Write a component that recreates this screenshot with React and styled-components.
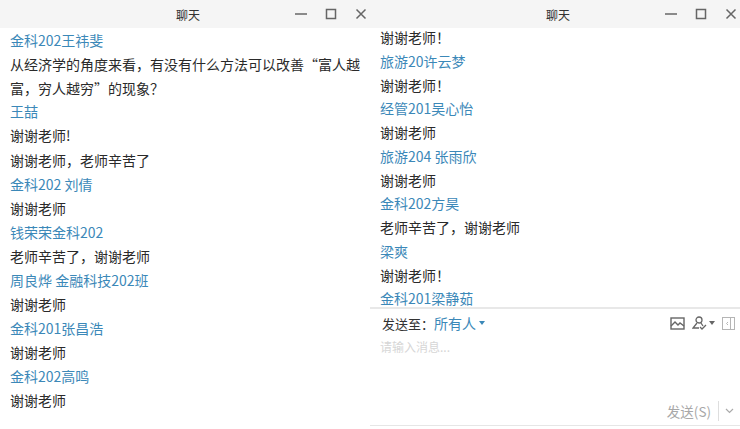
import React from "react";
import styled, { createGlobalStyle } from "styled-components";

const Global = createGlobalStyle`
  html, body { margin: 0; padding: 0; background: #fff; }
  body { width: 740px; height: 429px; overflow: hidden; font-family: "Noto Sans CJK SC", "Liberation Sans", sans-serif; }
`;
const Page = styled.div`
  display: grid;
  grid-template-columns: 370px 370px;
  width: 740px;
  height: 429px;
  overflow: hidden;
`;
const Win = styled.section`
  display: flex;
  flex-direction: column;
  height: 429px;
  min-width: 0;
  background: #fff;
`;
const TitleBar = styled.header`
  position: relative;
  flex: none;
  height: 28px;
  padding-left: 6px;
  background: #f5f5f5;
  display: flex;
  align-items: center;
  justify-content: center;
  font-size: 12px;
  color: #333;
`;
const Controls = styled.div`
  position: absolute;
  right: 2px;
  top: 7px;
  display: flex;
  gap: 16px;
  color: #666;
`;
const Feed = styled.div`
  flex: ${p => (p.$fill ? 1 : "none")};
  height: ${p => (p.$h ? `${p.$h}px` : "auto")};
  overflow: hidden;
  padding: 0 10px;
  display: flex;
  flex-direction: column;
  & > :first-child { margin-top: ${p => p.$shift || 0}px; }
`;
const Row = styled.div`
  flex: none;
  height: ${p => p.$pitch}px;
  line-height: ${p => p.$pitch}px;
  font-size: 14px;
  white-space: nowrap;
  color: ${p => (p.$name ? "#3b88b8" : "#2a2a2a")};
`;
const Wrap = styled(Row)`
  height: 47px;
  line-height: 24px;
  white-space: normal;
  width: 352px;
`;
const Composer = styled.div`
  flex: 1;
  border-top: 2px solid #e8e8e8;
  display: flex;
  flex-direction: column;
  min-height: 0;
`;
const ComposerBar = styled.div`
  flex: none;
  height: 28px;
  display: flex;
  align-items: center;
  padding: 0 5px 0 12px;
  font-size: 13px;
  color: #333;
`;
const Target = styled.span`
  font-size: 14px;
  color: #3b88b8;
  display: inline-flex;
  align-items: center;
  gap: 3px;
`;
const Caret = styled.i`
  width: 0;
  height: 0;
  border-left: 3px solid transparent;
  border-right: 3px solid transparent;
  border-top: 4px solid ${p => p.$c || "#3b88b8"};
`;
const Tools = styled.div`
  margin-left: auto;
  display: flex;
  align-items: center;
  gap: 7px;
  color: #666;
`;
const Person = styled.span`
  display: inline-flex;
  align-items: center;
  gap: 2px;
`;
const Placeholder = styled.div`
  flex: 1;
  padding: 0 10px;
  font-size: 12px;
  line-height: 20px;
  color: #d6d6d6;
`;
const SendRow = styled.div`
  flex: none;
  height: 28px;
  padding-top: 3px;
  margin-bottom: 3px;
  border-bottom: 1px solid #e6e6e6;
  display: flex;
  align-items: center;
  justify-content: flex-end;
  padding-right: 6px;
  font-size: 13.5px;
  color: #a8a8a8;
`;
const Split = styled.span`
  width: 1px;
  height: 20px;
  background: #dedede;
  margin: 0 6px 0 7px;
`;

const Ctl = () => (
  <Controls>
    <svg width="14" height="14" viewBox="0 0 14 14" fill="none" stroke="currentColor" strokeWidth="1.5"><path d="M1 7h12" /></svg>
    <svg width="14" height="14" viewBox="0 0 14 14" fill="none" stroke="currentColor" strokeWidth="1.5"><rect x="2.5" y="2.5" width="9" height="9" /></svg>
    <svg width="14" height="14" viewBox="0 0 14 14" fill="none" stroke="currentColor" strokeWidth="1.5"><path d="M2.5 2.5l9 9M11.500 2.500l-9 9" /></svg>
  </Controls>
);

const left = [
  ["谢谢老师!", 0, 25], ["谢谢老师，老师辛苦了", 0, 24], ["金科202 刘倩", 1, 24], ["谢谢老师", 0, 24],
  ["钱荣荣金科202", 1, 24], ["老师辛苦了，谢谢老师", 0, 24], ["周良烨 金融科技202班", 1, 24], ["谢谢老师", 0, 24],
  ["金科201张昌浩", 1, 24], ["谢谢老师", 0, 24], ["金科202高鸣", 1, 24], ["谢谢老师", 0, 24],
];
const right = [
  "谢谢老师！", "*旅游20许云梦", "谢谢老师！", "*经管201吴心怡", "谢谢老师", "*旅游204 张雨欣", "谢谢老师",
  "*金科202方昊", "老师辛苦了，谢谢老师", "*梁爽", "谢谢老师！", "*金科201梁静茹",
];

export default function App() {
  return (
    <Page>
      <Global />
      <Win>
        <TitleBar>聊天<Ctl /></TitleBar>
        <Feed $fill>
          <Row $name $pitch={24}>金科202王祎斐</Row>
          <Wrap $pitch={24}>从经济学的角度来看，有没有什么方法可以改善“富人越富，穷人越穷”的现象？</Wrap>
          <Row $name $pitch={24}>王喆</Row>
          {left.map(([t, n, h], i) => <Row key={i} $name={!!n} $pitch={h}>{t}</Row>)}
        </Feed>
      </Win>
      <Win>
        <TitleBar>聊天<Ctl /></TitleBar>
        <Feed $h={279} $shift={-2}>
          {right.map((t, i) => (
            <Row key={i} $name={t[0] === "*"} $pitch={23.75}>{t.replace("*", "")}</Row>
          ))}
        </Feed>
        <Composer>
          <ComposerBar>
            发送至：
            <Target>所有人<Caret /></Target>
            <Tools>
              <svg width="15" height="13" viewBox="0 0 15 13" fill="none" stroke="currentColor" strokeWidth="1.4"><rect x="1" y="1" width="13" height="11" /><path d="M1 9l4-4 3 3 2-2 4 3" /></svg>
              <Person>
                <svg width="15" height="14" viewBox="0 0 15 14" fill="none" stroke="currentColor" strokeWidth="1.3"><circle cx="7" cy="4" r="3" /><path d="M5 7l-4 5h6M9 7l2 3" /><path d="M8 11l2 2 4-4" /></svg>
                <Caret $c="#666" />
              </Person>
              <svg width="13" height="13" viewBox="0 0 13 13" fill="none" stroke="#b5b5b5" strokeWidth="1"><rect x="0.5" y="0.5" width="12" height="12" /><path d="M8.5 .5v12M6 5l-1.500 1.500L6 8" /></svg>
            </Tools>
          </ComposerBar>
          <Placeholder>请输入消息...</Placeholder>
          <SendRow>
            发送(S)<Split />
            <svg width="9" height="6" viewBox="0 0 9 6" fill="none" stroke="#aaa" strokeWidth="1.200"><path d="M1 1l3.500 3.500L8 1" /></svg>
          </SendRow>
        </Composer>
      </Win>
    </Page>
  );
}
